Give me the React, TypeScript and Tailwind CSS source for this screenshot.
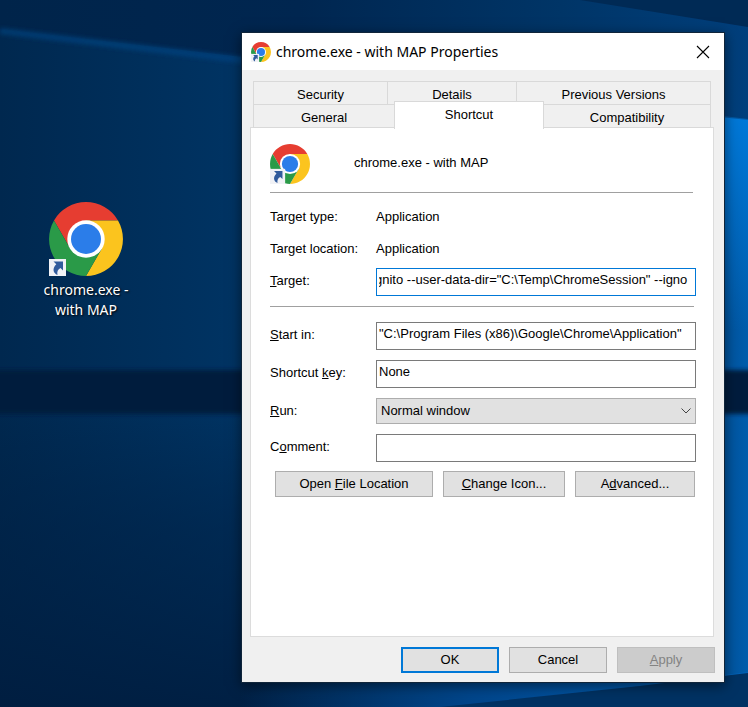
import { ReactNode } from "react";

const ui = "font-['Liberation_Sans',Arial,sans-serif]";
const title = "font-['Noto_Sans','Open_Sans',sans-serif]";

function Wallpaper() {
  return (
    <svg
      className="absolute inset-0 h-full w-full"
      viewBox="0 0 748 707"
      preserveAspectRatio="none"
      aria-hidden="true"
    >
      <defs>
        <linearGradient id="base" x1="0" y1="0" x2="1" y2="0">
          <stop offset="0" stopColor="#00284f" />
          <stop offset="0.33" stopColor="#003464" />
          <stop offset="0.95" stopColor="#004f96" />
          <stop offset="1" stopColor="#005cab" />
        </linearGradient>
        <linearGradient id="lower" x1="0" y1="0" x2="0" y2="1">
          <stop offset="0" stopColor="#001c3c" stopOpacity="0" />
          <stop offset="0.4" stopColor="#001f42" stopOpacity="0.5" />
          <stop offset="1" stopColor="#001c3e" stopOpacity="0.85" />
        </linearGradient>
        <linearGradient id="top" x1="0" y1="0" x2="1" y2="0">
          <stop offset="0" stopColor="#00244a" />
          <stop offset="0.4" stopColor="#002650" />
          <stop offset="0.75" stopColor="#003567" />
          <stop offset="1" stopColor="#003f7c" />
        </linearGradient>
        <linearGradient id="beam" x1="0" y1="0" x2="1" y2="0">
          <stop offset="0" stopColor="#003a70" />
          <stop offset="1" stopColor="#00488c" />
        </linearGradient>
        <linearGradient id="flare" x1="0" y1="0" x2="0" y2="1">
          <stop offset="0" stopColor="#0078d8" />
          <stop offset="1" stopColor="#0078d8" stopOpacity="0" />
        </linearGradient>
        <linearGradient id="foot" x1="0" y1="0" x2="1" y2="0">
          <stop offset="0" stopColor="#00488c" stopOpacity="0" />
          <stop offset="0.45" stopColor="#00458a" />
          <stop offset="1" stopColor="#0062b8" />
        </linearGradient>
        <filter id="soft" x="-20%" y="-20%" width="140%" height="140%">
          <feGaussianBlur stdDeviation="2" />
        </filter>
      </defs>
      <rect width="748" height="707" fill="url(#base)" />
      <rect y="410" width="600" height="297" fill="url(#lower)" />
      <path d="M0 0H748V119L242 57L0 29Z" fill="url(#top)" />
      <path d="M580 0H748V27Z" fill="#002a55" />
      <path d="M0 31L242 60L724 119" stroke="url(#beam)" strokeWidth="6" fill="none" filter="url(#soft)" />
      <path d="M720 117L748 120V330H720Z" fill="url(#flare)" />
      <rect x="-10" y="370" width="768" height="44" fill="#001c3c" filter="url(#soft)" />
      <path d="M240 682H748V672L500 704L430 710H240Z" fill="url(#foot)" />
      <path d="M748 673L640 686L440 707H748Z" fill="#003263" />
    </svg>
  );
}

function ChromeIcon({ className, arrow }: { className: string; arrow: number }) {
  return (
    <svg className={className} viewBox="0 0 74 74" aria-hidden="true">
      <path d="M5 18.5A37 37 0 0 1 69 18.5H37L21 46.2Z" fill="#e63d31" />
      <path d="M69 18.5A37 37 0 0 1 37 74L53 46.2L37 18.5Z" fill="#fbc41e" />
      <path d="M37 74A37 37 0 0 1 5 18.5L21 46.2H53Z" fill="#2a9a48" />
      <circle cx="37" cy="37" r="18.7" fill="#fff" />
      <circle cx="37" cy="37" r="15" fill="#2b7de9" />
      <g transform={`translate(0 ${74 - arrow}) scale(${arrow / 17})`}>
        <rect width="17" height="17" fill="#f1f2f6" />
        <path d="M4.500 2.500H14V11.500L11.500 9C8.800 10.500 7.800 12.500 8.500 16C4 14 3 9.500 7.300 5.200Z" fill="#315b9c" />
      </g>
    </svg>
  );
}

function Tab({ children, className }: { children: ReactNode; className: string }) {
  return (
    <button role="tab" aria-selected="false" className={`flex h-6 items-center justify-center border border-[#d9d9d9] bg-[#f0f0f0] pt-1 ${className}`}>
      {children}
    </button>
  );
}

function Button({ children, className, disabled }: { children: ReactNode; className: string; disabled?: boolean }) {
  return (
    <button disabled={disabled} className={`h-[26px] text-center text-[13px] ${className}`}>
      {children}
    </button>
  );
}

const plain = "border border-[#adadad] bg-[#e1e1e1]";
const field = "h-7 w-full min-w-0 border border-[#7a7a7a] bg-white px-0.5 pb-1.5 outline-none";
const row = "grid grid-cols-[106px_minmax(0,1fr)] items-center";

export default function App() {
  return (
    <main className={`relative flex min-h-screen items-start overflow-hidden bg-[#002b55] pt-8 pr-[23px] pb-6 text-[13px] leading-4 text-black ${ui}`}>
      <Wallpaper />
      <div className="relative w-[241px] shrink-0 pt-[170px]">
        <button className={`ml-[31px] flex w-[110px] flex-col items-center text-[14px] leading-5 text-white [text-shadow:1px_1px_2px_#000] ${title}`}>
          <ChromeIcon className="mb-1 size-[74px]" arrow={17} />
          <span>chrome.exe -<br />with MAP</span>
        </button>
      </div>

      <section role="dialog" aria-labelledby="caption" className="relative min-w-0 flex-1 border border-[#10253a] bg-[#f0f0f0] shadow-[0_3px_12px_rgba(0,0,0,0.5)]">
        <header className="flex h-[37px] items-center bg-white pr-3.5 pl-[9px]">
          <ChromeIcon className="mr-[5px] size-5" arrow={30} />
          <h1 id="caption" className={`flex-1 text-[14px] ${title}`}>chrome.exe - with MAP Properties</h1>
          <button aria-label="Close">
            <svg className="size-3.5" viewBox="0 0 14 14" fill="none" stroke="#000" strokeWidth="1.1">
              <path d="M1 1L13 13M13 1L1 13" />
            </svg>
          </button>
        </header>

        <div className="pt-[11px] pr-2.5 pb-[9px] pl-2">
          <div role="tablist" className="mx-[3px]">
            <div className="grid grid-cols-[134px_129px_1fr]">
              <Tab className="border-r-0">Security</Tab>
              <Tab className="border-r-0">Details</Tab>
              <Tab className="">Previous Versions</Tab>
            </div>
            <div className="-mt-px grid grid-cols-[141px_150px_1fr] items-end">
              <Tab className="border-r-0">General</Tab>
              <button role="tab" aria-selected="true" className="relative z-10 -mt-[3px] -mb-px h-7 border border-b-0 border-[#d9d9d9] bg-white pb-0.5">Shortcut</button>
              <Tab className="border-l-0">Compatibility</Tab>
            </div>
          </div>

          <div role="tabpanel" className="-mt-px min-h-[510px] border border-[#dcdcdc] bg-white pt-4 pr-[17px] pl-[19px]">
            <div className="flex h-10 items-center">
              <ChromeIcon className="mr-11 size-10" arrow={28} />
              <span className="pb-0.5">chrome.exe - with MAP</span>
            </div>
            <hr className="mt-2 mr-[3px] border-[#a0a0a0]" />
            <dl className="mt-4 space-y-4">
              <div className={row}><dt>Target type:</dt><dd>Application</dd></div>
              <div className={row}><dt>Target location:</dt><dd>Application</dd></div>
            </dl>
            <div className={`mt-[11px] ${row}`}>
              <label htmlFor="target" className="pb-0.5"><u>T</u>arget:</label>
              <div className="h-7 border border-[#0078d7] px-0.5">
                <div className="overflow-hidden">
                  <input id="target" className="-ml-1 h-5 w-[calc(100%+4px)] outline-none" defaultValue={'gnito --user-data-dir="C:\\Temp\\ChromeSession" --igno'} />
                </div>
              </div>
            </div>
            <hr className="mt-2.5 mr-0.5 border-[#a0a0a0]" />
            <div className={`mt-[15px] ${row}`}>
              <label htmlFor="start" className="pb-0.5"><u>S</u>tart in:</label>
              <input id="start" className={field} defaultValue={'"C:\\Program Files (x86)\\Google\\Chrome\\Application"'} />
            </div>
            <div className={`mt-2.5 ${row}`}>
              <label htmlFor="key" className="pb-0.5">Shortcut <u>k</u>ey:</label>
              <input id="key" className={field} defaultValue="None" />
            </div>
            <div className={`mt-2.5 ${row}`}>
              <label htmlFor="run"><u>R</u>un:</label>
              <div className="relative">
                <select id="run" className={`block h-[26px] w-full appearance-none px-1 outline-none ${plain}`}>
                  <option>Normal window</option>
                </select>
                <svg className="pointer-events-none absolute top-[9px] right-1 h-2 w-3" viewBox="0 0 12 8" fill="none" stroke="#444">
                  <path d="M1.500 1.500L6 6L10.500 1.500" />
                </svg>
              </div>
            </div>
            <div className={`mt-2.5 ${row}`}>
              <label htmlFor="comment" className="pb-0.5">C<u>o</u>mment:</label>
              <input id="comment" className={field} />
            </div>
            <div className="mt-[9px] mr-px ml-[5px] grid grid-cols-[158fr_122fr_120fr] gap-2.5">
              <Button className={plain}>Open <u>F</u>ile Location</Button>
              <Button className={plain}><u>C</u>hange Icon...</Button>
              <Button className={plain}>A<u>d</u>vanced...</Button>
            </div>
          </div>

          <footer className="-mr-px mt-2.5 flex justify-end gap-2.5">
            <Button className="w-[98px] border-2 border-[#0078d7] bg-[#e1e1e1]">OK</Button>
            <Button className={`w-[98px] ${plain}`}>Cancel</Button>
            <Button disabled className="w-[98px] border border-[#bfbfbf] bg-[#cccccc] text-[#838383]"><u>A</u>pply</Button>
          </footer>
        </div>
      </section>
    </main>
  );
}
